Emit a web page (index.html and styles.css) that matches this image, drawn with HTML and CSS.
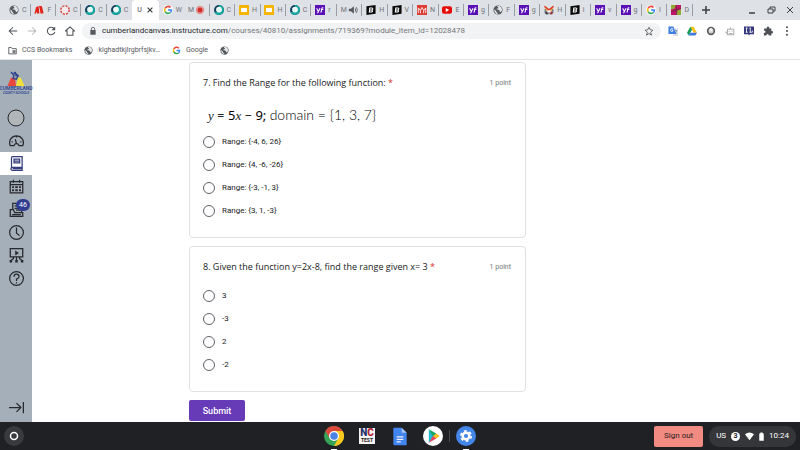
FILE: index.html
```html
<!DOCTYPE html>
<html lang="en">
<head>
<meta charset="utf-8">
<title>Unit quiz</title>
<link rel="stylesheet" href="styles.css">
</head>
<body>
<svg class="defs" aria-hidden="true">
  <symbol id="globe" viewBox="0 0 24 24"><circle cx="12" cy="12" r="11" fill="#55595e"/><path d="M3 10l5 5v2l3 2v3C6 21 3 17 3 10zM10 3l5-1 5 4 2 6-3 5-3-1v-3l-4-2h-3v-2l4-1V6l-2-1z" fill="#e4e6ea"/></symbol>
  <symbol id="adobe" viewBox="0 0 24 24"><path d="M1 21L5 5l6-2 2 17-5 1-2-5-2 5zM12 2l7 1 4 17-7 1z" fill="#e2231a"/></symbol>
  <symbol id="canvas" viewBox="0 0 24 24"><circle cx="12" cy="12" r="10" fill="#f4e9ea" stroke="#d64541" stroke-width="3.500" stroke-dasharray="5 2.850"/></symbol>
  <symbol id="webex" viewBox="0 0 24 24"><circle cx="12" cy="12" r="12" fill="#123f5e"/><path d="M12 0a12 12 0 0 1 0 24C5 24 2 20 1 16c8 4 12-5 11-16z" fill="#18a8a1"/><circle cx="12" cy="11" r="7" fill="#eafaf6"/></symbol>
  <symbol id="google" viewBox="0 0 24 24"><circle cx="12" cy="12" r="12" fill="#fff"/><g fill="none" stroke-width="4"><path d="M5 8a8 8 0 0 1 13-2" stroke="#ea4335"/><path d="M5 16a8 8 0 0 1 0-8" stroke="#fbbc05"/><path d="M18 18A8.500 8.500 0 0 1 5 16" stroke="#34a853"/><path d="M12 12h8q0 4-2 6" stroke="#4285f4"/></g></symbol>
  <symbol id="record" viewBox="0 0 24 24"><circle cx="12" cy="12" r="9" fill="#e6a6a4" stroke="#df817e" stroke-width="2"/><circle cx="12" cy="12" r="6" fill="#d02f2b"/></symbol>
  <symbol id="slides" viewBox="0 0 24 24"><rect width="24" height="24" rx="2" fill="#f4b400"/><rect x="5" y="7" width="14" height="10" fill="#fff"/></symbol>
  <symbol id="yahoo" viewBox="0 0 24 24"><rect width="24" height="24" fill="#5a10b5"/><path d="M4 8l4 8 4-8M8 16l-2 4M15 17l1-7q1-4 4-3M14 11h6M13 17h2" fill="none" stroke="#fff" stroke-width="2.500"/></symbol>
  <symbol id="speaker" viewBox="0 0 24 24"><path d="M2 9h5l7-6v18l-7-6H2z" fill="#55595e"/><path d="M17 8q3 4 0 8M20 5q5 7 0 14" stroke="#55595e" stroke-width="2" fill="none"/></symbol>
  <symbol id="bold" viewBox="0 0 24 24"><path d="M1 3l22-3v21L1 24z" fill="#0b0b0b"/><path d="M9 7h5q3 0 2 3-1 2-3 2 4 1 2 4-1 1-3 1H8zM9 12h4" fill="none" stroke="#fff" stroke-width="2.500"/></symbol>
  <symbol id="redm" viewBox="0 0 24 24"><rect width="24" height="24" fill="#dc3c31"/><path d="M3 19V7l5 6 4-7 4 7 5-6v12M8 20v-7M16 20v-7" stroke="#fff" stroke-width="2" fill="none"/></symbol>
  <symbol id="youtube" viewBox="0 0 24 24"><rect y="3" width="24" height="18" rx="5" fill="#e60b0b"/><path d="M9 7l8 5-8 5z" fill="#fff"/></symbol>
  <symbol id="mail" viewBox="0 0 24 24"><path d="M2 2l10 7 10-7v13H2z" fill="#e8b85e"/><path d="M1 3l11 9L23 3" fill="none" stroke="#d33" stroke-width="3.500"/><path d="M3 10v8h18v-8" fill="none" stroke="#617187" stroke-width="3"/><circle cx="7" cy="19" r="4" fill="#45404a"/><circle cx="17" cy="19" r="4" fill="#993b43"/><path d="M8 13h8v5H8z" fill="#fff"/></symbol>
  <symbol id="mosaic" viewBox="0 0 24 24"><rect width="24" height="24" fill="#c3146b"/><path d="M0 0h12l-4 9-8 2zM15 13l9-3v14H13z" fill="#91ac35"/><path d="M12 0l2 12-14 4M13 24l1-12 10-5" fill="none" stroke="#6b3040" stroke-width="2"/></symbol>
</svg>

<header class="browser">
  <div class="strip">
    <nav class="tabs" aria-label="Open tabs">
      <a class="tab" href="#"><svg><use href="#globe"/></svg><span>C</span></a>
      <a class="tab" href="#"><svg><use href="#adobe"/></svg><span>F</span></a>
      <a class="tab" href="#"><svg><use href="#canvas"/></svg><span>C</span></a>
      <a class="tab" href="#"><svg><use href="#webex"/></svg><span>C</span></a>
      <a class="tab plain" href="#"><svg><use href="#webex"/></svg><span>C</span></a>
      <div class="tab active"><b>U</b><button type="button" aria-label="Close tab"><svg viewBox="0 0 10 10"><path d="M1 1l8 8M9 1l-8 8" stroke="#3c4043" stroke-width="2"/></svg></button></div>
      <a class="tab" href="#"><svg><use href="#google"/></svg><span>W</span></a>
      <a class="tab media" href="#"><span>M</span><svg><use href="#record"/></svg></a>
      <a class="tab" href="#"><svg><use href="#webex"/></svg><span>C</span></a>
      <a class="tab" href="#"><svg><use href="#slides"/></svg><span>H</span></a>
      <a class="tab" href="#"><svg><use href="#slides"/></svg><span>H</span></a>
      <a class="tab" href="#"><svg><use href="#webex"/></svg><span>C</span></a>
      <a class="tab" href="#"><svg><use href="#yahoo"/></svg><span>r</span></a>
      <a class="tab media" href="#"><span>M</span><svg><use href="#speaker"/></svg></a>
      <a class="tab" href="#"><svg><use href="#bold"/></svg><span>H</span></a>
      <a class="tab" href="#"><svg><use href="#bold"/></svg><span>V</span></a>
      <a class="tab" href="#"><svg><use href="#redm"/></svg><span>N</span></a>
      <a class="tab" href="#"><svg><use href="#youtube"/></svg><span>E</span></a>
      <a class="tab" href="#"><svg><use href="#yahoo"/></svg><span>g</span></a>
      <a class="tab" href="#"><svg><use href="#globe"/></svg><span>F</span></a>
      <a class="tab" href="#"><svg><use href="#yahoo"/></svg><span>g</span></a>
      <a class="tab" href="#"><svg><use href="#mail"/></svg><span>H</span></a>
      <a class="tab" href="#"><svg><use href="#bold"/></svg><span>i</span></a>
      <a class="tab" href="#"><svg><use href="#yahoo"/></svg><span>v</span></a>
      <a class="tab" href="#"><svg><use href="#yahoo"/></svg><span>g</span></a>
      <a class="tab" href="#"><svg><use href="#google"/></svg><span>I</span></a>
      <a class="tab" href="#"><svg><use href="#mosaic"/></svg><span>D</span></a>
    </nav>
    <button class="newtab" type="button" aria-label="New tab"><svg viewBox="0 0 10 10"><path d="M5 1v8M1 5h8" stroke="#3c4043" stroke-width="1.500"/></svg></button>
    <div class="window">
      <button type="button" aria-label="Minimize"><svg viewBox="0 0 10 10"><path d="M2 8h6" stroke="#3c4043" stroke-width="1.500"/></svg></button>
      <button type="button" aria-label="Restore"><svg viewBox="0 0 10 10" fill="none" stroke="#3c4043"><path d="M2 4h5v4H2zM4 4V2h5v4H7"/></svg></button>
      <button type="button" aria-label="Close window"><svg viewBox="0 0 10 10"><path d="M2 2l6 6M8 2L2 8" stroke="#3c4043"/></svg></button>
    </div>
  </div>

  <div class="toolbar">
    <div class="navs">
      <button type="button" aria-label="Back"><svg viewBox="0 0 24 24" fill="none" stroke="#4d5156" stroke-width="2.500"><path d="M22 12H3M12 3l-9 9 9 9"/></svg></button>
      <button type="button" aria-label="Forward"><svg viewBox="0 0 24 24" fill="none" stroke="#b4b7bb" stroke-width="2.500"><path d="M2 12h19M12 3l9 9-9 9"/></svg></button>
      <button type="button" aria-label="Reload"><svg viewBox="0 0 24 24" fill="none" stroke="#4d5156" stroke-width="2.500"><path d="M21 14a9 9 0 1 1-3-9l3 3"/><path d="M22 1v9h-9z" fill="#4d5156" stroke="none"/></svg></button>
      <button type="button" aria-label="Home"><svg viewBox="0 0 24 24" fill="none" stroke="#4d5156" stroke-width="2.500"><path d="M1 12L12 2l11 10h-4v10H5V12z"/></svg></button>
    </div>
    <div class="address">
      <svg class="lock" viewBox="0 0 24 24"><rect x="4" y="9" width="16" height="14" rx="1" fill="#55595e"/><path d="M7 10V6a5 5 0 0 1 10 0v4" fill="none" stroke="#55595e" stroke-width="2.500"/></svg>
      <a class="url" href="#"><span>cumberlandcanvas.instructure.com</span>/courses/40810/assignments/719369?module_item_id=12028478</a>
      <button type="button" aria-label="Bookmark"><svg viewBox="0 0 24 24" fill="none" stroke="#4d5156" stroke-width="2"><path d="M12 3l3 6 6 1-5 5 2 7-6-4-6 4 2-7-5-5 6-1z"/></svg></button>
    </div>
    <div class="extensions">
      <button type="button" aria-label="Translate"><svg viewBox="0 0 24 24"><path d="M9 6h15v18H13z" fill="#d8dde5"/><path d="M13 11h9M18 9v3M21 11q-2 6-5 8M15 13l6 6" stroke="#6d8fb8" stroke-width="1.500"/><path d="M1 1h12l6 18H1z" fill="#3f7fe3"/><path d="M12 7q-2-2-5 0-2 4 1 6 4 1 4-3H9" fill="none" stroke="#fff" stroke-width="2"/></svg></button>
      <button type="button" aria-label="Drive"><svg viewBox="0 0 24 24"><path d="M8 2h8l8 14h-8z" fill="#fbc118"/><path d="M8 2l4 7-8 14-4-7z" fill="#159b57"/><path d="M8 16h16l-4 7H4z" fill="#4277df"/></svg></button>
      <button type="button" aria-label="Recorder"><svg viewBox="0 0 24 24"><circle cx="12" cy="12" r="8" fill="#d2d4d6" stroke="#595b5e" stroke-width="4"/><circle cx="12" cy="9" r="4" fill="#f7f7f7"/></svg></button>
      <button type="button" aria-label="Robot"><svg viewBox="0 0 24 24" fill="none" stroke="#aeb1b4" stroke-width="2.500"><path d="M6 8h15v13H6zM13 8V3M3 13v5M1 15h5M10 12v2M17 12v2M9 18h9"/></svg></button>
      <button type="button" aria-label="Immersive library"><svg viewBox="0 0 24 24"><path d="M0 1h24v19H14l-2 3-2-3H0z" fill="#35367b"/><path d="M4 5h5M6 5v10M4 15h5M13 5h4M15 5v10M13 15h7v-4" stroke="#fff" stroke-width="2" fill="none"/></svg></button>
      <button type="button" aria-label="Extensions"><svg viewBox="0 0 24 24"><path d="M3 6h6q-1-5 3-5t3 5h5v6q4-1 4 3t-4 3v5h-6q0-4-3-4t-3 4H2v-6q4 0 4-3t-4-3z" fill="#4d5156"/></svg></button>
      <button type="button" aria-label="Menu"><svg viewBox="0 0 24 24" fill="#4d5156"><circle cx="12" cy="3" r="2.500"/><circle cx="12" cy="12" r="2.500"/><circle cx="12" cy="21" r="2.500"/></svg></button>
    </div>
  </div>

  <nav class="bookmarks" aria-label="Bookmarks">
    <a href="#"><svg viewBox="0 0 24 24"><path d="M2 4h7l2 3h11v14H2z" fill="none" stroke="#5f6368" stroke-width="2.500"/><path d="M12 11h8v8h-8z" fill="#777b80"/></svg>CCS Bookmarks</a>
    <a href="#"><svg><use href="#globe"/></svg>klghadtkjlrgbrfsjkv…</a>
    <a href="#"><svg><use href="#google"/></svg>Google</a>
    <a href="#" aria-label="Untitled bookmark"><svg><use href="#globe"/></svg></a>
  </nav>
</header>

<div class="page">
  <nav class="sidebar" aria-label="Canvas">
    <a class="brand" href="#"><svg viewBox="8 2 48 42"><path d="M18 21l11-1 3 24H8z" fill="#e9473d"/><path d="M32 44l5-23 8-1 11 24z" fill="#f2df38"/><circle cx="29" cy="8" r="4" fill="#30458c"/><path d="M18 5l8 9-2 9 9 2 5-10-7-5M30 16l8-3" fill="none" stroke="#30458c" stroke-width="4"/></svg><span class="name">CUMBERLAND</span><span class="sub">COUNTY SCHOOLS</span></a>
    <a class="avatar" href="#" aria-label="Account"><svg viewBox="0 0 18 18"><circle cx="9" cy="9" r="8" fill="#b3b6b9" stroke="#26292d"/></svg></a>
    <a href="#" aria-label="Dashboard"><svg viewBox="0 0 24 24"><path d="M2 20a11 11 0 1 1 20 0h-6q-1-3-4-3t-4 3zM12 17l-2-7M12 5v2M4 14h2M18 14h2"/></svg></a>
    <a class="current" href="#" aria-label="Courses"><svg viewBox="0 0 24 24"><path d="M4 3q0-2 2-2h15v17H6q-3 0-3 2.500T6 23h15v-5M4 3v17M8 5h9v6H8zM8 8h9M6 20h15"/></svg></a>
    <a href="#" aria-label="Calendar"><svg viewBox="0 0 24 24"><path d="M2 4h20v18H2zM2 9h20M7 1v5M17 1v5"/><path d="M5 13h3M10 13h4M16 13h3M5 18h3M10 18h4M16 18h3" stroke-width="3"/></svg></a>
    <a class="inbox" href="#" aria-label="Inbox, 46 unread"><svg viewBox="0 0 24 24"><path d="M6 12V2h14v14M2 12h5l2 5h13v6H2zM9 6h8M9 10h8M11 13h7M5 20h14"/></svg><span class="badge">46</span></a>
    <a href="#" aria-label="History"><svg viewBox="0 0 24 24"><circle cx="12" cy="12" r="11"/><path d="M12 4v9l5 4"/></svg></a>
    <a href="#" aria-label="Studio"><svg viewBox="0 0 24 24"><path d="M2 1h20v13H2zM12 14v5M7 14v3l-4 3M17 14v3l4 3"/><path d="M11 6l3 2-3 2zM2 20h2v2H2zM11 20h2v2h-2zM20 20h2v2h-2z" fill="#26292d"/></svg></a>
    <a href="#" aria-label="Help"><svg viewBox="0 0 24 24"><circle cx="12" cy="12" r="11"/><path d="M8 9q0-4 4-4t4 4q0 2-4 4v3M12 18v2"/></svg></a>
    <button class="expand" type="button" aria-label="Expand navigation"><svg viewBox="0 0 24 24"><path d="M0 12h19M12 5l7 7-7 7M23 3v18"/></svg></button>
  </nav>

  <main>
    <form>
      <fieldset class="card">
        <div class="head"><h2>7. Find the Range for the following function: <em>*</em></h2><span>1 point</span></div>
        <p class="equation"><i>y</i> = <b>5</b><i>x</i> − <b>9;</b> <span>domain = {1, 3, 7}</span></p>
        <div class="options">
          <label><input type="radio" name="q7">Range: {-4, 6, 26}</label>
          <label><input type="radio" name="q7">Range: {4, -6, -26}</label>
          <label><input type="radio" name="q7">Range: {-3, -1, 3}</label>
          <label><input type="radio" name="q7">Range: {3, 1, -3}</label>
        </div>
      </fieldset>
      <fieldset class="card">
        <div class="head"><h2>8. Given the function y=2x-8, find the range given x= 3 <em>*</em></h2><span>1 point</span></div>
        <div class="options">
          <label><input type="radio" name="q8">3</label>
          <label><input type="radio" name="q8">-3</label>
          <label><input type="radio" name="q8">2</label>
          <label><input type="radio" name="q8">-2</label>
        </div>
      </fieldset>
      <button class="submit" type="submit">Submit</button>
    </form>
  </main>
</div>

<footer class="shelf">
  <button class="launcher" type="button" aria-label="Launcher"><svg viewBox="0 0 20 20"><circle cx="10" cy="10" r="10" fill="#383a3e"/><circle cx="10" cy="10" r="3.500" fill="none" stroke="#fff" stroke-width="1.500"/></svg></button>
  <nav class="apps" aria-label="Apps">
    <a class="open" href="#" aria-label="Chrome"><svg viewBox="0 0 24 24"><circle cx="12" cy="12" r="12" fill="#35a456"/><path d="M12 12L1.600 6A12 12 0 0 1 22.400 6z" fill="#dc493d"/><path d="M12 6h10.400A12 12 0 0 1 12 24l5-9z" fill="#fbc91e"/><path d="M1.600 6L7 15l5-9z" fill="#dc493d"/><circle cx="12" cy="12" r="6" fill="#fff"/><circle cx="12" cy="12" r="4.500" fill="#4a83e5"/></svg></a>
    <a class="nctest" href="#"><span><i>N</i><b>C</b></span><small>TEST</small></a>
    <a href="#" aria-label="Docs"><svg viewBox="0 0 24 24"><path d="M5 2h9l6 6v15H5q-1 0-1-1V3q0-1 1-1z" fill="#4385ef"/><path d="M14 2l6 6h-6z" fill="#a6c5f8"/><path d="M8 13h8M8 16h8M8 19h5" stroke="#e9f1ff" stroke-width="1.500"/></svg></a>
    <a href="#" aria-label="Play Store"><svg viewBox="0 0 24 24"><circle cx="12" cy="12" r="12" fill="#fff"/><path d="M7 4l6 8-6 8z" fill="#20b9d5"/><path d="M7 4l9 5-4 4z" fill="#16a765"/><path d="M16 9l4 3-4 3-4-3z" fill="#f7bf20"/><path d="M12 12l4 3-9 5z" fill="#e44759"/></svg></a>
    <a class="open settings" href="#" aria-label="Settings"><svg viewBox="0 0 24 24"><circle cx="12" cy="12" r="12" fill="#4485e8"/><circle cx="12" cy="12" r="4" fill="none" stroke="#fff" stroke-width="3"/><circle cx="12" cy="12" r="6.200" fill="none" stroke="#fff" stroke-width="2" stroke-dasharray="3.250 3.250"/></svg></a>
  </nav>
  <div class="status">
    <button class="signout" type="button">Sign out</button>
    <button class="tray" type="button"><span>US</span><span class="count">3</span><svg viewBox="0 0 24 24"><path d="M0 6q12-9 24 0L12 22z" fill="#fff"/></svg><svg class="battery" viewBox="0 0 12 24"><path d="M0 4h3V1h6v3h3v19H0z" fill="#fff"/></svg><time>10:24</time></button>
  </div>
</footer>
</body>
</html>
```
FILE: styles.css
```css
* { box-sizing: border-box; }
body {
  margin: 0;
  min-height: 100vh;
  display: flex;
  flex-direction: column;
  font: 8px/12px Roboto, "Liberation Sans", sans-serif;
  color: #3c4043;
  background: #fff;
}
a { color: inherit; text-decoration: none; }
button { border: 0; padding: 0; margin: 0; background: none; font: inherit; color: inherit; display: flex; align-items: center; justify-content: center; }
svg { display: block; flex: none; width: 10px; height: 10px; }
.defs { position: absolute; width: 0; height: 0; }

.browser { border-bottom: 1px solid #e3e4e6; }
.strip { display: flex; align-items: stretch; height: 20px; padding-left: 5px; background: #dee1e6; }
.tabs { display: flex; flex: 0 1 688px; min-width: 0; }
.tab { flex: 1 1 0; min-width: 0; display: flex; align-items: center; gap: 3px; padding-left: 4px; font-size: 7px; color: #6f7378; }
.tab::after { content: ""; width: 1px; height: 12px; margin-left: auto; background: #9a9da2; }
.tab.media { gap: 1px; }
.plain::after, .active::after { display: none; }
.tab.active { background: #fff; border-radius: 4px 4px 0 0; gap: 5px; padding-left: 5px; color: #3c4043; }
.active b { font-weight: 400; }
.active svg { width: 6px; height: 6px; }
.newtab { width: 26px; }
.window { display: flex; margin-left: auto; gap: 9px; padding-right: 5px; }

.toolbar { display: flex; align-items: center; height: 21px; gap: 7px; padding: 0 8px; }
.navs { display: flex; gap: 9px; }
.address { flex: 1; min-width: 0; display: flex; align-items: center; height: 16px; gap: 5px; padding: 0 7px; border-radius: 8px; background: #f1f3f4; }
.lock { width: 8px; height: 8px; }
.url { flex: 1; font-size: 8px; white-space: nowrap; overflow: hidden; color: #74777b; }
.url span { color: #27292c; }
.extensions { display: flex; gap: 9px; }

.bookmarks { display: flex; align-items: center; height: 18px; gap: 12px; padding-left: 8px; font-size: 7px; color: #55595e; }
.bookmarks a { display: flex; align-items: center; gap: 5px; }
.bookmarks svg { width: 9px; height: 9px; }

.page { flex: 1; display: flex; }
.sidebar { flex: none; width: 32px; display: flex; flex-direction: column; background: #a5afba; }
.sidebar a { display: flex; align-items: center; justify-content: center; height: 23px; }
.sidebar svg { width: 15px; height: 15px; fill: none; stroke: #26292d; stroke-width: 2; }
.sidebar .brand { flex-direction: column; height: 46px; padding-bottom: 1px; color: #354b91; font-weight: 700; }
.brand svg { width: 18px; height: 15px; stroke: none; }
.brand .name { font-size: 5px; line-height: 5px; }
.brand .sub { font-size: 3px; line-height: 4px; }
.sidebar .avatar svg { width: 18px; height: 18px; stroke-width: 1; }
.sidebar .current { background: #fff; }
.sidebar .current svg { stroke: #353c7c; }
.inbox { position: relative; }
.badge { position: absolute; left: 16px; top: 1px; width: 14px; height: 12px; border-radius: 6px; background: #2f3d91; color: #fff; font-size: 7px; text-align: center; }
.sidebar .expand { margin-top: auto; height: 30px; }

main { flex: 1; padding: 2px 16px 1px 157px; }
form { max-width: 337px; }
.card { min-width: 0; margin: 0 0 8px; padding: 12px 14px 20px 13px; border: 1px solid #dfe1e4; border-radius: 4px; }
.head { display: flex; justify-content: space-between; align-items: center; height: 16px; margin-bottom: 15px; color: #75787c; }
.card h2 { margin: 0; font: 9px/16px "Open Sans", Roboto, sans-serif; color: #202124; }
.card em { font-style: normal; color: #d93025; }
.head span { font-size: 7px; }
.equation { margin: -1px 5px 11px; font: 13px/20px Lato, sans-serif; height: 20px; color: #222; white-space: nowrap; }
.equation i { font-family: "Liberation Serif", serif; }
.equation b { font-family: "Noto Sans", sans-serif; font-weight: 400; color: #000; }
.equation span { font-size: 14px; font-weight: 300; color: #000; }
.options { display: grid; gap: 11px; }
.options label { display: flex; align-items: center; gap: 7px; height: 12px; color: #202124; }
.options input { appearance: none; width: 12px; height: 12px; margin: 0; border: 1px solid #5f6368; border-radius: 50%; }
.submit { width: 56px; height: 21px; border-radius: 2px; background: #673ab7; color: #fff; font-size: 9px; font-weight: 500; }

.shelf { display: grid; grid-template-columns: 1fr auto 1fr; align-items: center; height: 28px; padding: 0 4px; background: #202125; color: #fff; }
.launcher svg { width: 20px; height: 20px; }
.launcher { justify-self: start; }
.apps { display: flex; align-items: center; gap: 13px; }
.apps a { position: relative; }
.apps svg { width: 20px; height: 20px; }
.open::after { content: ""; position: absolute; left: 7px; bottom: -4px; width: 6px; height: 1px; background: #fff; }
.settings::before { content: ""; position: absolute; left: -7px; top: 4px; width: 1px; height: 12px; background: #484a4e; }
.apps .nctest { display: flex; flex-direction: column; align-items: center; width: 16px; height: 16px; margin: 0 2px; background: #f4f4f4; font-size: 10px; line-height: 9px; color: #222; }
.nctest i { font-style: normal; font-weight: 900; color: #25336b; }
.nctest b { font-weight: 900; color: #b42335; }
.nctest small { font-size: 5px; line-height: 6px; font-weight: 700; }
.status { display: flex; justify-self: end; align-items: center; gap: 6px; }
.signout { width: 49px; height: 21px; border-radius: 2px; background: #f28b82; color: #292020; }
.tray { height: 21px; gap: 5px; padding: 0 7px; border-radius: 10px; background: #35363a; }
.count { width: 9px; height: 9px; border-radius: 50%; background: #fff; color: #202125; font-size: 7px; line-height: 9px; font-weight: 700; text-align: center; }
.tray svg { width: 9px; height: 9px; }
.tray .battery { width: 5px; }
```
